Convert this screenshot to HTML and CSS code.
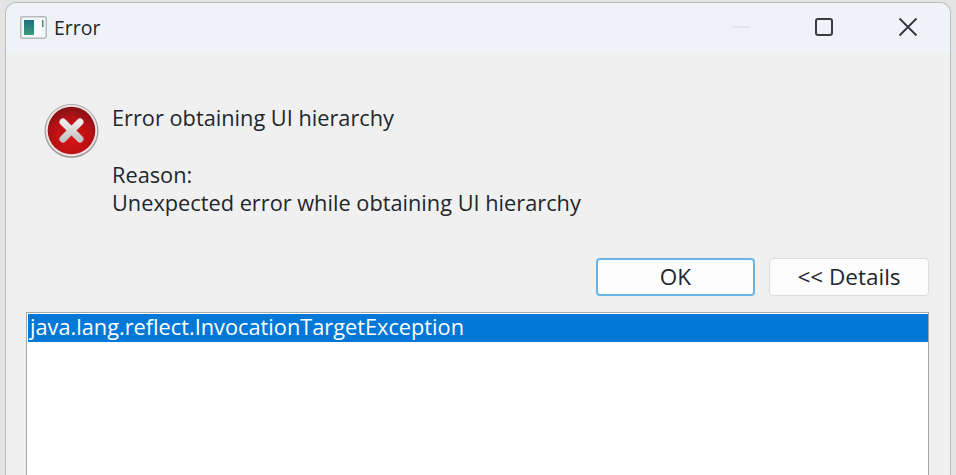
FILE: index.html
```html
<!DOCTYPE html>
<html lang="en">
  <head>
    <meta charset="UTF-8" />
    <title>Error</title>
    <link rel="stylesheet" href="styles.css">
  </head>
  <body>
    <div class="window">
      <div class="titlebar">
        <div class="title">
          <svg class="app-icon" width="27" height="23" viewBox="0 0 27 23">
            <rect x="0.75" y="0.75" width="25.5" height="21.5" rx="2" fill="#f3f5f6" stroke="#b4bbbe" stroke-width="1.5"/>
            <rect x="4" y="4" width="10" height="15" fill="url(#appFill)"/>
            <rect x="15" y="4" width="6" height="15" fill="#fbfcfc"/>
            <rect x="22" y="4" width="1.5" height="7" fill="#4f8f76"/>
            <defs>
              <linearGradient id="appFill" x1="0" y1="0" x2="0" y2="1">
                <stop offset="0" stop-color="#1f6f80"/>
                <stop offset="1" stop-color="#3e9a7c"/>
              </linearGradient>
            </defs>
          </svg>
          <span>Error</span>
        </div>
        <div class="controls">
          <svg class="ctl" width="18" height="18" viewBox="0 0 18 18">
            <path d="M0 9H18" stroke="#dfe2e5" stroke-width="1.5"/>
          </svg>
          <svg class="ctl" width="18" height="18" viewBox="0 0 18 18">
            <rect x="1" y="1" width="16" height="16" rx="2" fill="none" stroke="#3a3d40" stroke-width="2"/>
          </svg>
          <svg class="ctl" width="20" height="20" viewBox="0 0 20 20">
            <path d="M1.5 1.5L18.5 18.5M18.5 1.5L1.5 18.5" fill="none" stroke="#33363a" stroke-width="1.8"/>
          </svg>
        </div>
      </div>
      <div class="content">
        <div class="message">
          <svg class="err-icon" width="55" height="55" viewBox="0 0 55 55">
            <defs>
              <radialGradient id="errFill" cx="0.5" cy="0.65" r="0.6">
                <stop offset="0" stop-color="#d81414"/>
                <stop offset="0.65" stop-color="#bb1014"/>
                <stop offset="1" stop-color="#8a1316"/>
              </radialGradient>
              <linearGradient id="errCross" x1="0" y1="0" x2="0" y2="1">
                <stop offset="0" stop-color="#ececec"/>
                <stop offset="1" stop-color="#c6c6c6"/>
              </linearGradient>
            </defs>
            <circle cx="27.5" cy="28" r="27" fill="#9d9d9d"/>
            <circle cx="27.5" cy="27.5" r="25.8" fill="#efe4e4"/>
            <circle cx="27.5" cy="27.5" r="23.8" fill="url(#errFill)"/>
            <path d="M19 19L36 36M36 19L19 36" stroke="url(#errCross)" stroke-width="7" stroke-linecap="round"/>
          </svg>
          <div class="text">
            <p class="heading">Error obtaining UI hierarchy</p>
            <p>Reason:</p>
            <p>Unexpected error while obtaining UI hierarchy</p>
          </div>
        </div>
        <div class="buttons">
          <button type="button" class="btn btn-default">OK</button>
          <button type="button" class="btn">&lt;&lt; Details</button>
        </div>
        <div class="listbox">
          <div class="row-selected">java.lang.reflect.InvocationTargetException</div>
        </div>
      </div>
    </div>
  </body>
</html>
```

FILE: styles.css
```css
html,
body {
  height: 100%;
}
body {
  margin: 0;
  padding: 3px 6px 0;
  box-sizing: border-box;
  background-color: #e4e4e4;
  font-family: "Open Sans", "Noto Sans", "Liberation Sans", sans-serif;
  color: #23262b;
  overflow: hidden;
}
.window {
  height: 100%;
  display: flex;
  flex-direction: column;
  background-color: #f0f0f0;
  border-radius: 10px 10px 0 0;
  box-shadow: 0 0 0 1px #bcbcbc;
}
.titlebar {
  height: 50px;
  flex: none;
  display: flex;
  justify-content: space-between;
  align-items: center;
  padding: 0 32px 2px 14px;
  background-color: #eff3f8;
  border-radius: 10px 10px 0 0;
  box-sizing: border-box;
}
.title {
  display: flex;
  align-items: center;
  gap: 7px;
  font-size: 19.5px;
}
.controls {
  display: flex;
  align-items: center;
  gap: 65px;
}
.content {
  flex: 1;
  display: flex;
  flex-direction: column;
  padding: 0 21px 0 20px;
  min-height: 0;
}
.message {
  display: flex;
  align-items: flex-start;
  padding: 50px 0 0 18px;
  gap: 13px;
}
.err-icon {
  flex: none;
}
.text {
  font-size: 21.75px;
  line-height: 28.5px;
  margin-top: 1px;
}
.text p {
  margin: 0;
}
.text .heading {
  margin-bottom: 28px;
}
.buttons {
  display: flex;
  justify-content: flex-end;
  gap: 14px;
  margin-top: 40px;
}
.btn {
  width: 160px;
  height: 38px;
  padding: 0;
  background-color: #fdfdfd;
  border: 1px solid #dcdcdc;
  border-radius: 4px;
  font-family: inherit;
  font-size: 22.5px;
  color: #23262b;
}
.btn-default {
  width: 159px;
  border: 2px solid #6ab5e6;
}
.listbox {
  flex: 1;
  min-height: 0;
  margin-top: 16px;
  background-color: #fff;
  border: 1px solid #a8a8a8;
  border-bottom: none;
  padding: 1px 0 0 1px;
}
.row-selected {
  height: 28px;
  line-height: 26px;
  padding-left: 2px;
  background-color: #0078d7;
  color: #fff;
  font-size: 21.75px;
}
```
